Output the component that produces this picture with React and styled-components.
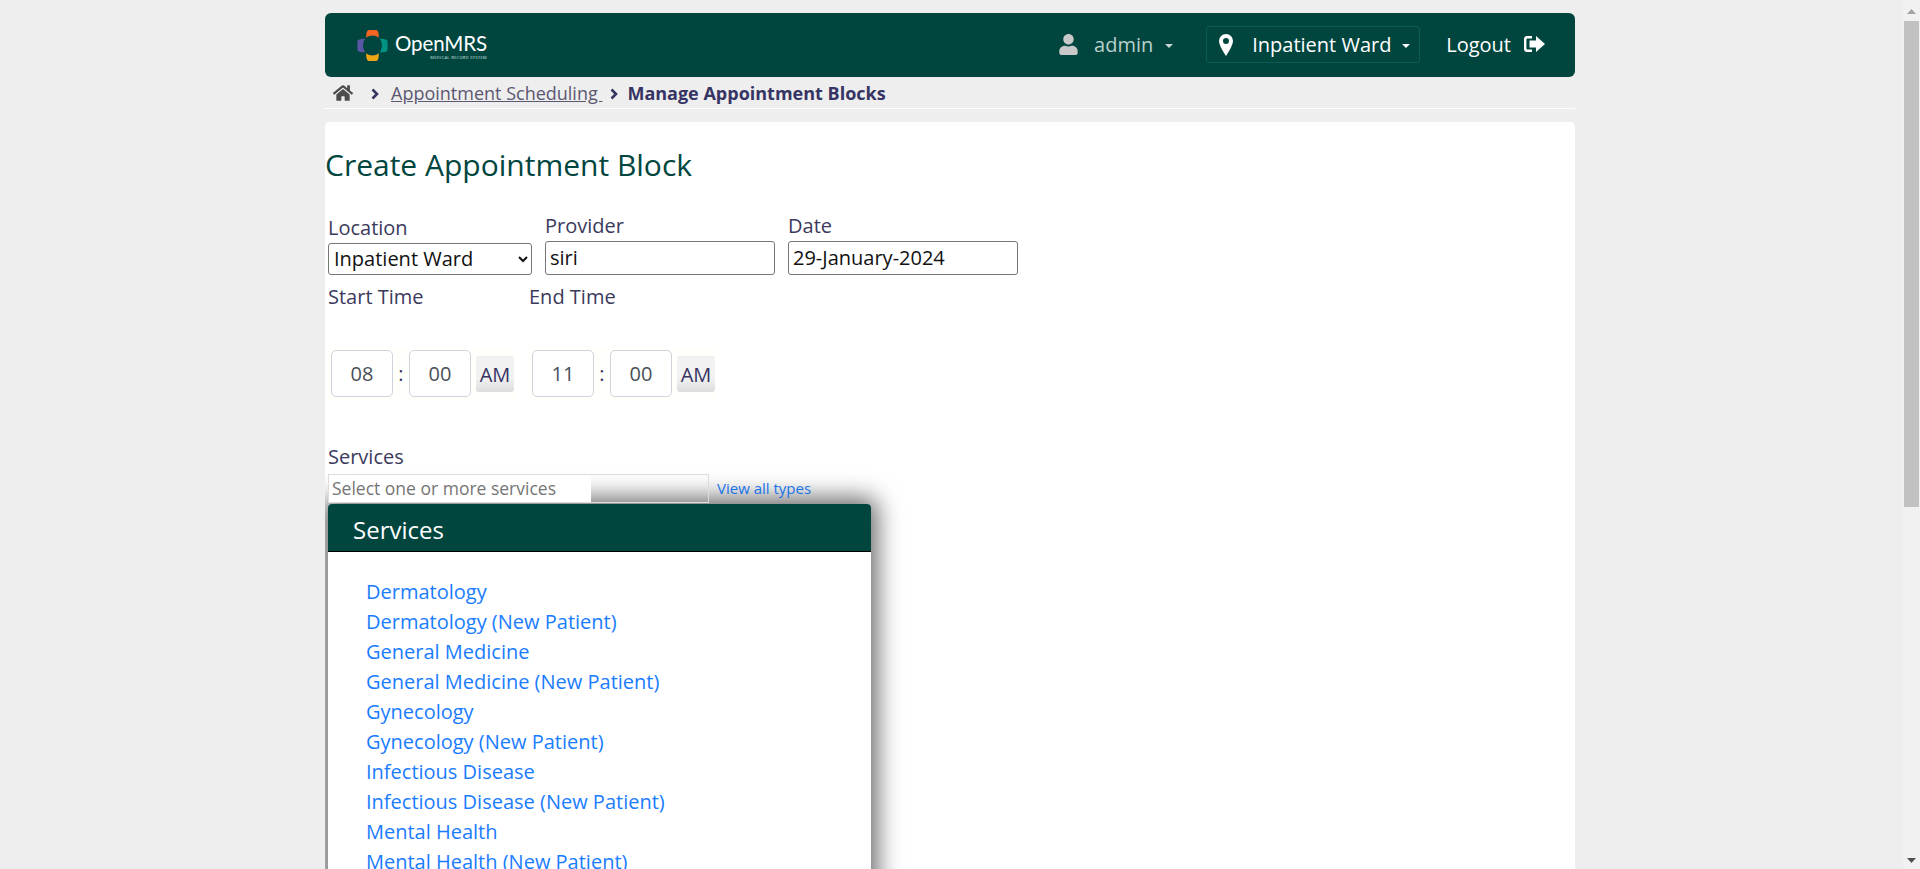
import React from "react";
import styled, { createGlobalStyle } from "styled-components";
import { FaHome, FaUser } from "react-icons/fa";

const Global = createGlobalStyle`
  html, body { margin: 0; padding: 0; height: 100%; overflow: hidden; }
  body { background: #eeeeee; font-family: "Open Sans", sans-serif; color: #363463; }
  * { box-sizing: border-box; }
`;

const Viewport = styled.div`
  display: flex;
  height: 869px;
  width: 1920px;
  overflow: hidden;
`;
const Page = styled.div`
  width: 1903px;
  flex: none;
  padding: 13px 328px 0 325px;
`;
const ScrollTrack = styled.div`
  width: 17px;
  flex: none;
  background: #f1f1f1;
  display: flex;
  flex-direction: column;
  align-items: center;
  position: relative;
`;
const ScrollThumb = styled.div`
  position: absolute;
  top: 21px;
  left: 1px;
  width: 15px;
  height: 486px;
  background: #c1c1c1;
`;
const ScrollArrow = styled.svg`
  position: absolute;
  left: 4px;
  width: 9px;
  height: 5px;
  ${(p) => (p.$down ? "bottom: 6px;" : "top: 9px;")}
  fill: ${(p) => (p.$down ? "#505050" : "#a3a3a3")};
`;

const Header = styled.header`
  height: 64px;
  background: #00463f;
  border-radius: 6px;
  display: flex;
  align-items: center;
  padding: 0 30px 0 31px;
`;
const Brand = styled.div`
  display: flex;
  align-items: center;
  gap: 6px;
  color: #fff;
  margin-right: auto;
`;
const BrandText = styled.div`
  display: flex;
  flex-direction: column;
  align-items: flex-end;
  line-height: 1;
  padding-top: 3px;
`;
const BrandName = styled.span`
  font-family: "Lato", sans-serif;
  font-size: 20.5px;
  font-weight: 400;
  line-height: 21px;
  letter-spacing: -0.1px;
`;
const BrandTag = styled.span`
  font-size: 4px;
  line-height: 5px;
  letter-spacing: 0.35px;
  color: #d7e4e2;
  margin-top: 1px;
`;
const UserMenu = styled.div`
  display: flex;
  align-items: center;
  color: #b8cfcb;
  font-size: 20px;
  margin-right: 33px;
  padding-bottom: 2px;
`;
const LocationMenu = styled.div`
  display: flex;
  align-items: center;
  width: 214px;
  height: 37px;
  border: 1px solid #0a5d54;
  border-radius: 3px;
  color: #fff;
  font-size: 20px;
  padding-left: 12px;
  margin-right: 26px;
  margin-bottom: 1px;
`;
const LogoutLink = styled.div`
  display: flex;
  align-items: center;
  color: #fff;
  font-size: 20px;
  padding-bottom: 2px;
`;
const Caret = styled.span`
  display: inline-block;
  width: 0;
  height: 0;
  border-left: 4.5px solid transparent;
  border-right: 4.5px solid transparent;
  border-top: 4.5px solid ${(p) => p.$color || "#fff"};
  margin-left: ${(p) => p.$gap || 11}px;
  margin-top: 3px;
`;
const IconSlot = styled.span`
  display: inline-flex;
  align-items: center;
  margin-right: ${(p) => p.$gap || 0}px;
  margin-left: ${(p) => p.$before || 0}px;
  color: ${(p) => p.$color || "inherit"};
`;

const Crumbs = styled.nav`
  height: 32px;
  border-bottom: 1px solid #fff;
  display: flex;
  align-items: center;
  padding-left: 8px;
  font-size: 18px;
  margin-bottom: 13px;
`;
const CrumbLink = styled.a`
  color: #5b5770;
  text-decoration: underline;
  white-space: pre;
`;
const CrumbCurrent = styled.span`
  font-weight: 700;
`;
const Sep = styled.svg`
  flex: none;
  width: 8px;
  height: 12px;
  margin: 2px ${(p) => p.$r}px 0 ${(p) => p.$l}px;
  fill: none;
  stroke: #363463;
  stroke-width: 2.6;
`;

const Card = styled.main`
  background: #fff;
  border-radius: 5px 5px 0 0;
  height: 760px;
  overflow: hidden;
`;
const Title = styled.h1`
  margin: 0;
  padding-top: 23px;
  font-size: 30px;
  font-weight: 400;
  line-height: 39px;
  color: #00463f;
`;
const FieldRow = styled.div`
  display: flex;
  margin-top: 28px;
  padding-left: 3px;
  align-items: flex-start;
`;
const Field = styled.div`
  display: flex;
  flex-direction: column;
  width: ${(p) => p.$w}px;
  padding-top: ${(p) => p.$pt || 0}px;
`;
const Label = styled.label`
  display: block;
  font-size: 20px;
  line-height: 28px;
  margin-bottom: 1px;
  color: #3b3a5c;
`;
const SelectBox = styled.select`
  font-family: "Open Sans", sans-serif;
  font-size: 20px;
  width: 204px;
  height: 32px;
  border: 1px solid #767676;
  border-radius: 3px;
  background: #fff;
  color: #111;
  padding: 0 0 2px 1px;
`;
const TextBox = styled.input`
  font-family: "Open Sans", sans-serif;
  font-size: 20px;
  width: 230px;
  height: 34px;
  border: 1px solid #767676;
  border-radius: 3px;
  color: #111;
  padding: 0 4px 2px;
  background: #fff;
`;
const TimeLabels = styled.div`
  display: flex;
  padding-left: 3px;
  margin-top: 8px;
`;
const TimeLabel = styled.div`
  font-size: 20px;
  line-height: 28px;
  color: #3b3a5c;
  width: ${(p) => p.$w}px;
`;
const TimeRow = styled.div`
  display: flex;
  margin-top: 36px;
  padding-left: 3px;
  gap: 13px;
`;
const TimePicker = styled.div`
  display: flex;
  align-items: center;
  width: ${(p) => p.$w}px;
  height: 53px;
  background: #fffffb;
  padding-left: 3px;
`;
const TimeCell = styled.div`
  width: 62px;
  height: 47px;
  border: 1px solid #ced4da;
  border-radius: 5px;
  background: #fff;
  color: #495057;
  font-size: 20px;
  display: flex;
  align-items: center;
  justify-content: center;
`;
const Colon = styled.span`
  width: 16px;
  text-align: center;
  color: #363463;
  font-size: 20px;
`;
const Meridian = styled.div`
  width: 38px;
  height: 36px;
  margin-left: 5px;
  border-top: 1px solid #eee;
  border-radius: 3px;
  background: linear-gradient(#f2f2f2 0%, #f2f2f2 60%, #dcdcdc 100%);
  color: #363463;
  font-size: 20px;
  display: flex;
  align-items: center;
  justify-content: center;
`;
const ServicesBlock = styled.section`
  padding-left: 3px;
  margin-top: 43px;
`;
const ServiceInputRow = styled.div`
  display: flex;
  align-items: flex-start;
  height: 30px;
  margin-top: 3px;
`;
const ServiceInput = styled.div`
  width: 381px;
  height: 29px;
  border: 1px solid #dcdcdc;
  position: relative;
  z-index: 1;
  display: flex;
  align-items: stretch;
`;
const Placeholder = styled.span`
  display: block;
  width: 262px;
  background: #fff;
  color: #757575;
  font-size: 17.5px;
  line-height: 26px;
  padding-left: 3px;
  white-space: nowrap;
`;
const ViewAll = styled.a`
  color: #1a73e8;
  font-size: 15px;
  line-height: 20px;
  margin-left: 8px;
  margin-top: 4px;
  position: relative;
  z-index: 1;
`;
const Popup = styled.div`
  width: 543px;
  height: 400px;
  background: #fff;
  border-radius: 4px 4px 0 0;
  box-shadow: 0 0 24px 6px rgba(0, 0, 0, 0.6);
`;
const PopupHead = styled.div`
  height: 48px;
  background: #00463f;
  border-bottom: 1px solid #000;
  border-radius: 4px 4px 0 0;
  color: #fff;
  font-size: 24px;
  line-height: 51px;
  padding-left: 25px;
`;
const ServiceList = styled.ul`
  list-style: none;
  margin: 0;
  padding: 25px 0 0 38px;
`;
const ServiceItem = styled.li`
  font-size: 20px;
  line-height: 30px;
  color: #1a7cff;
`;

const services = [
  "Dermatology",
  "Dermatology (New Patient)",
  "General Medicine",
  "General Medicine (New Patient)",
  "Gynecology",
  "Gynecology (New Patient)",
  "Infectious Disease",
  "Infectious Disease (New Patient)",
  "Mental Health",
  "Mental Health (New Patient)",
];

const Logo = () => (
  <svg width="33" height="33" viewBox="0 0 33 34">
    <path d="M10 9C10 3 11 1 13 1h7c2 0 3 2 3 8-4-3-9-3-13 0z" fill="#f26522" />
    <path d="M9 10C3 10 1 11 1 13v8c0 2 2 3 8 3-3-4-3-10 0-14z" fill="#5b57a6" />
    <path d="M24 10c6 0 8 1 8 3v8c0 2-2 3-8 3 3-4 3-10 0-14z" fill="#009384" />
    <path d="M10 25c0 6 1 8 3 8h7c2 0 3-2 3-8-4 3-9 3-13 0z" fill="#eea616" />
  </svg>
);
const MapPin = () => (
  <svg width="14" height="22" viewBox="0 0 14 22">
    <path fillRule="evenodd" fill="#fff" d="M7 0a7 7 0 0 1 7 7c0 3-3 9-7 15C3 16 0 10 0 7a7 7 0 0 1 7-7zm0 4a3 3 0 1 0 0 6 3 3 0 0 0 0-6z" />
  </svg>
);
const SignOut = () => (
  <svg width="21" height="18" viewBox="0 0 21 18" fill="#fff">
    <path d="M3 1h5v2.4H3.600c-.7 0-1.200.5-1.200 1.200v8.800c0 .7.5 1.200 1.200 1.200H8V17H3c-1.700 0-3-1.300-3-3V4c0-1.700 1.300-3 3-3z" />
    <path d="M12 1l9 8-9 8v-4.500H5.500v-7H12z" />
  </svg>
);
const Chevron = ({ l, r }) => (
  <Sep $l={l} $r={r} viewBox="0 0 8 12"><path d="M1.500 1.500L6 6l-4.500 4.500" /></Sep>
);

export default function App() {
  return (
    <Viewport>
      <Global />
      <Page>
        <Header>
          <Brand>
            <Logo />
            <BrandText>
              <BrandName>OpenMRS</BrandName>
              <BrandTag>MEDICAL RECORD SYSTEM</BrandTag>
            </BrandText>
          </Brand>
          <UserMenu>
            <IconSlot $gap={15} $color="#c9c9c9"><FaUser size={21} /></IconSlot>
            admin
            <Caret $color="#c4d6d3" $gap={12} />
          </UserMenu>
          <LocationMenu>
            <IconSlot $gap={19}><MapPin /></IconSlot>
            Inpatient Ward
            <Caret $gap={11} />
          </LocationMenu>
          <LogoutLink>
            Logout
            <IconSlot $before={13}><SignOut /></IconSlot>
          </LogoutLink>
        </Header>
        <Crumbs>
          <FaHome size={20} color="#4c4c4c" />
          <Chevron l={18} r={12} />
          <CrumbLink>Appointment Scheduling </CrumbLink>
          <Chevron l={8} r={9} />
          <CrumbCurrent>Manage Appointment Blocks</CrumbCurrent>
        </Crumbs>
        <Card>
          <Title>Create Appointment Block</Title>
          <FieldRow>
            <Field $w={217} $pt={2}>
              <Label>Location</Label>
              <SelectBox defaultValue="Inpatient Ward">
                <option>Inpatient Ward</option>
              </SelectBox>
            </Field>
            <Field $w={243}>
              <Label>Provider</Label>
              <TextBox readOnly value="siri" />
            </Field>
            <Field $w={230}>
              <Label>Date</Label>
              <TextBox readOnly value="29-January-2024" />
            </Field>
          </FieldRow>
          <TimeLabels>
            <TimeLabel $w={201}>Start Time</TimeLabel>
            <TimeLabel $w={200}>End Time</TimeLabel>
          </TimeLabels>
          <TimeRow>
            <TimePicker $w={188}>
              <TimeCell>08</TimeCell>
              <Colon>:</Colon>
              <TimeCell>00</TimeCell>
              <Meridian>AM</Meridian>
            </TimePicker>
            <TimePicker $w={188}>
              <TimeCell>11</TimeCell>
              <Colon>:</Colon>
              <TimeCell>00</TimeCell>
              <Meridian>AM</Meridian>
            </TimePicker>
          </TimeRow>
          <ServicesBlock>
            <Label>Services</Label>
            <ServiceInputRow>
              <ServiceInput>
                <Placeholder>Select one or more services</Placeholder>
              </ServiceInput>
              <ViewAll>View all types</ViewAll>
            </ServiceInputRow>
            <Popup>
              <PopupHead>Services</PopupHead>
              <ServiceList>
                {services.map((s) => (
                  <ServiceItem key={s}>{s}</ServiceItem>
                ))}
              </ServiceList>
            </Popup>
          </ServicesBlock>
        </Card>
      </Page>
      <ScrollTrack>
        <ScrollArrow viewBox="0 0 9 5"><path d="M4.500 0L9 5H0z" /></ScrollArrow>
        <ScrollThumb />
        <ScrollArrow $down viewBox="0 0 9 5"><path d="M0 0h9L4.500 5z" /></ScrollArrow>
      </ScrollTrack>
    </Viewport>
  );
}
